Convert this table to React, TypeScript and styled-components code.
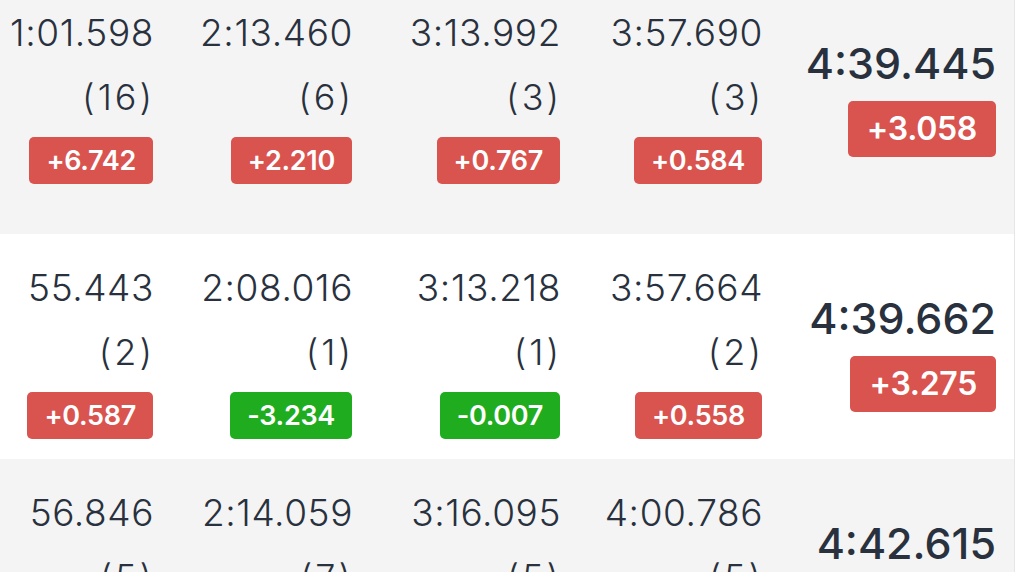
import React from 'react';
import styled, { createGlobalStyle } from 'styled-components';

const GlobalStyle = createGlobalStyle`
  html, body {
    margin: 0;
    padding: 0;
    background: #ffffff;
    overflow: hidden;
  }
  body {
    font-family: 'Inter', 'Liberation Sans', sans-serif;
    color: #28313d;
  }
`;

const Table = styled.div`
  width: 1014px;
  margin-top: -21px;
  border-right: 1px solid #e6e6e6;
`;

const Row = styled.div<{ $shade: boolean; $tall?: boolean }>`
  display: grid;
  grid-template-columns: 153px 199px 208px 202px 234px;
  padding-right: 18px;
  padding-bottom: ${(p) => (p.$tall ? '50px' : '20px')};
  background-color: ${(p) => (p.$shade ? '#f4f4f4' : '#ffffff')};
`;

const SplitCell = styled.div`
  display: flex;
  flex-direction: column;
  align-items: flex-end;
  padding-top: 22px;
`;

const Time = styled.div`
  font-size: 37px;
  font-weight: 300;
  line-height: 64px;
  letter-spacing: 0.6px;
  margin-right: -1px;
  white-space: nowrap;
`;

const Rank = styled(Time)`
  font-size: 36px;
  letter-spacing: 3px;
  margin-right: -2px;
`;

const Delta = styled.div<{ $good: boolean }>`
  margin-top: 8px;
  height: 47px;
  padding: 0 17px;
  border-radius: 5px;
  display: flex;
  align-items: center;
  background-color: ${(p) => (p.$good ? '#1fac1f' : '#d9534f')};
  color: #ffffff;
  font-size: 27px;
  font-weight: 600;
  letter-spacing: -0.3px;
`;

const TotalCell = styled.div`
  display: flex;
  flex-direction: column;
  align-items: flex-end;
  justify-content: center;
  padding-top: 28px;
`;

const TotalTime = styled.div`
  font-size: 43px;
  font-weight: 500;
  line-height: 56px;
  white-space: nowrap;
`;

const TotalDelta = styled(Delta)`
  margin-top: 10px;
  height: 56px;
  padding: 0 19px;
  font-size: 32px;
`;

type Split = { time: string; rank: number; delta: string };
type Result = { splits: Split[]; total: string; gap: string };

const results: Result[] = [
  {
    splits: [
      { time: '1:01.598', rank: 16, delta: '+6.742' },
      { time: '2:13.460', rank: 6, delta: '+2.210' },
      { time: '3:13.992', rank: 3, delta: '+0.767' },
      { time: '3:57.690', rank: 3, delta: '+0.584' },
    ],
    total: '4:39.445',
    gap: '+3.058',
  },
  {
    splits: [
      { time: '55.443', rank: 2, delta: '+0.587' },
      { time: '2:08.016', rank: 1, delta: '-3.234' },
      { time: '3:13.218', rank: 1, delta: '-0.007' },
      { time: '3:57.664', rank: 2, delta: '+0.558' },
    ],
    total: '4:39.662',
    gap: '+3.275',
  },
  {
    splits: [
      { time: '56.846', rank: 5, delta: '+1.990' },
      { time: '2:14.059', rank: 7, delta: '+2.809' },
      { time: '3:16.095', rank: 5, delta: '+2.870' },
      { time: '4:00.786', rank: 5, delta: '+3.680' },
    ],
    total: '4:42.615',
    gap: '+6.228',
  },
];

const App = () => (
  <>
    <GlobalStyle />
    <Table>
      {results.map((r, i) => (
        <Row key={i} $shade={i % 2 === 0} $tall={i === 0}>
          {r.splits.map((s, j) => (
            <SplitCell key={j}>
              <Time>{s.time}</Time>
              <Rank>({s.rank})</Rank>
              <Delta $good={s.delta.startsWith('-')}>{s.delta}</Delta>
            </SplitCell>
          ))}
          <TotalCell>
            <TotalTime>{r.total}</TotalTime>
            <TotalDelta $good={r.gap.startsWith('-')}>{r.gap}</TotalDelta>
          </TotalCell>
        </Row>
      ))}
    </Table>
  </>
);

export default App;
